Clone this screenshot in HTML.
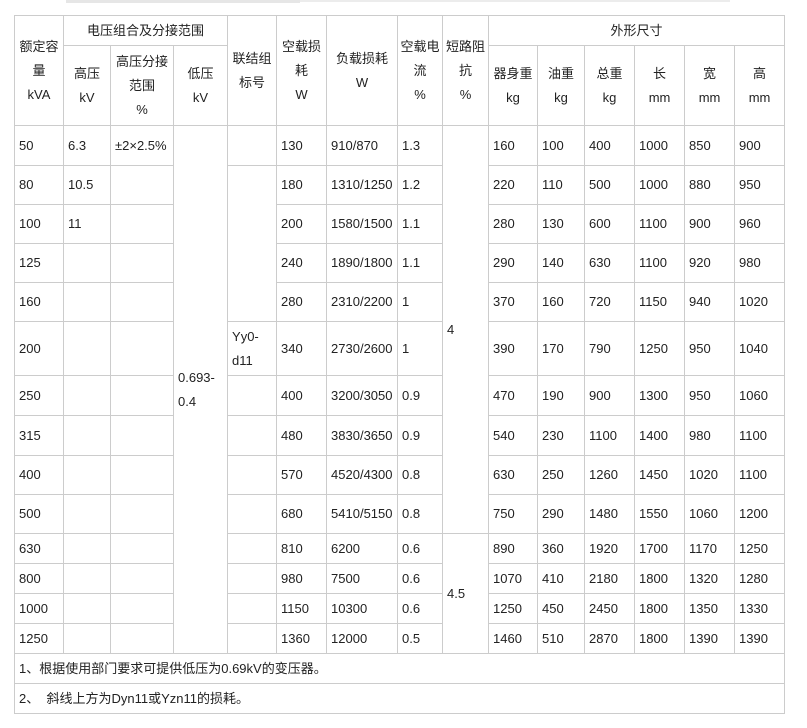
<!DOCTYPE html>
<html><head><meta charset="utf-8"><style>
body{margin:0;background:#fff;width:807px;height:728px;overflow:hidden;position:relative}
.bar{position:absolute;left:66px;top:0;width:234px;height:3px;background:#e6e6e6}
.bar2{position:absolute;left:300px;top:0;width:430px;height:2px;background:#ececec}
table{position:absolute;left:14px;top:15px;border-collapse:collapse;table-layout:fixed;width:771px;
font-family:"Liberation Sans","Noto Sans CJK SC",sans-serif;font-size:13px;color:#222}
td{border:1px solid #ccc;padding:0 0 0 4px;vertical-align:middle;line-height:24px;overflow:hidden;white-space:nowrap}
td.c{text-align:center;padding:0}
</style></head><body>
<div class="bar"></div><div class="bar2"></div>
<table>
<colgroup><col style="width:49px"><col style="width:47px"><col style="width:63px"><col style="width:54px"><col style="width:49px"><col style="width:50px"><col style="width:71px"><col style="width:45px"><col style="width:46px"><col style="width:49px"><col style="width:47px"><col style="width:50px"><col style="width:50px"><col style="width:50px"><col style="width:50px"></colgroup>
<tr style="height:30px"><td class="c" rowspan="2">额定容<br>量<br>kVA</td><td class="c" colspan="3">电压组合及分接范围</td><td class="c" rowspan="2">联结组<br>标号</td><td class="c" rowspan="2">空载损<br>耗<br>W</td><td class="c" rowspan="2">负载损耗<br>W</td><td class="c" rowspan="2">空载电<br>流<br>%</td><td class="c" rowspan="2">短路阻<br>抗<br>%</td><td class="c" colspan="6">外形尺寸</td></tr>
<tr style="height:80px"><td class="c">高压<br>kV</td><td class="c">高压分接<br>范围<br>%</td><td class="c">低压<br>kV</td><td class="c">器身重<br>kg</td><td class="c">油重<br>kg</td><td class="c">总重<br>kg</td><td class="c">长<br>mm</td><td class="c">宽<br>mm</td><td class="c">高<br>mm</td></tr>
<tr style="height:40px"><td>50</td><td>6.3</td><td>±2×2.5%</td><td rowspan="14">0.693-<br>0.4</td><td></td><td>130</td><td>910/870</td><td>1.3</td><td rowspan="10">4</td><td>160</td><td>100</td><td>400</td><td>1000</td><td>850</td><td>900</td></tr>
<tr style="height:39px"><td>80</td><td>10.5</td><td></td><td rowspan="4"></td><td>180</td><td>1310/1250</td><td>1.2</td><td>220</td><td>110</td><td>500</td><td>1000</td><td>880</td><td>950</td></tr>
<tr style="height:39px"><td>100</td><td>11</td><td></td><td>200</td><td>1580/1500</td><td>1.1</td><td>280</td><td>130</td><td>600</td><td>1100</td><td>900</td><td>960</td></tr>
<tr style="height:39px"><td>125</td><td></td><td></td><td>240</td><td>1890/1800</td><td>1.1</td><td>290</td><td>140</td><td>630</td><td>1100</td><td>920</td><td>980</td></tr>
<tr style="height:39px"><td>160</td><td></td><td></td><td>280</td><td>2310/2200</td><td>1</td><td>370</td><td>160</td><td>720</td><td>1150</td><td>940</td><td>1020</td></tr>
<tr style="height:54px"><td>200</td><td></td><td></td><td>Yy0-<br>d11</td><td>340</td><td>2730/2600</td><td>1</td><td>390</td><td>170</td><td>790</td><td>1250</td><td>950</td><td>1040</td></tr>
<tr style="height:40px"><td>250</td><td></td><td></td><td></td><td>400</td><td>3200/3050</td><td>0.9</td><td>470</td><td>190</td><td>900</td><td>1300</td><td>950</td><td>1060</td></tr>
<tr style="height:40px"><td>315</td><td></td><td></td><td></td><td>480</td><td>3830/3650</td><td>0.9</td><td>540</td><td>230</td><td>1100</td><td>1400</td><td>980</td><td>1100</td></tr>
<tr style="height:39px"><td>400</td><td></td><td></td><td></td><td>570</td><td>4520/4300</td><td>0.8</td><td>630</td><td>250</td><td>1260</td><td>1450</td><td>1020</td><td>1100</td></tr>
<tr style="height:39px"><td>500</td><td></td><td></td><td></td><td>680</td><td>5410/5150</td><td>0.8</td><td>750</td><td>290</td><td>1480</td><td>1550</td><td>1060</td><td>1200</td></tr>
<tr style="height:30px"><td>630</td><td></td><td></td><td></td><td>810</td><td>6200</td><td>0.6</td><td rowspan="4">4.5</td><td>890</td><td>360</td><td>1920</td><td>1700</td><td>1170</td><td>1250</td></tr>
<tr style="height:30px"><td>800</td><td></td><td></td><td></td><td>980</td><td>7500</td><td>0.6</td><td>1070</td><td>410</td><td>2180</td><td>1800</td><td>1320</td><td>1280</td></tr>
<tr style="height:30px"><td>1000</td><td></td><td></td><td></td><td>1150</td><td>10300</td><td>0.6</td><td>1250</td><td>450</td><td>2450</td><td>1800</td><td>1350</td><td>1330</td></tr>
<tr style="height:30px"><td>1250</td><td></td><td></td><td></td><td>1360</td><td>12000</td><td>0.5</td><td>1460</td><td>510</td><td>2870</td><td>1800</td><td>1390</td><td>1390</td></tr>
<tr style="height:30px"><td colspan="15">1、根据使用部门要求可提供低压为0.69kV的变压器。</td></tr>
<tr style="height:30px"><td colspan="15">2、&nbsp;&nbsp;斜线上方为Dyn11或Yzn11的损耗。</td></tr>
</table>
</body></html>
